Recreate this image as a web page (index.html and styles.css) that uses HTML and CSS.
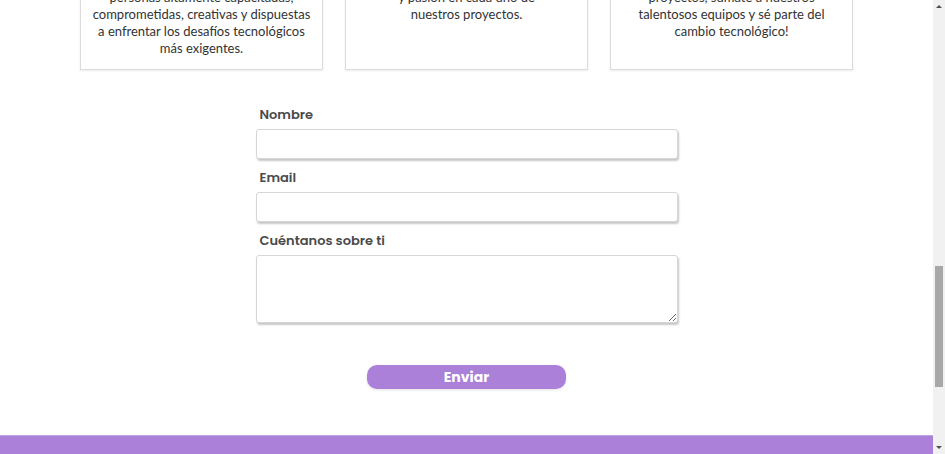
FILE: index.html
```html
<!DOCTYPE html>
<html lang="es">
<head>
<meta charset="utf-8">
<title>Contacto</title>
<link rel="stylesheet" href="styles.css">
</head>
<body>
<div class="page">
  <main class="content">
    <section class="cards">
      <article class="card">
        <p class="card-text">personas altamente capacitadas,<br>comprometidas, creativas y dispuestas<br>a enfrentar los desafíos tecnológicos<br>más exigentes.</p>
      </article>
      <article class="card">
        <p class="card-text">y pasión en cada uno de<br>nuestros proyectos.</p>
      </article>
      <article class="card">
        <p class="card-text">proyectos, súmate a nuestros<br>talentosos equipos y sé parte del<br>cambio tecnológico!</p>
      </article>
    </section>

    <form class="contact">
      <label class="field-label" for="nombre">Nombre</label>
      <input class="field-input" id="nombre" type="text">
      <label class="field-label" for="email">Email</label>
      <input class="field-input" id="email" type="email">
      <label class="field-label" for="about">Cuéntanos sobre ti</label>
      <textarea class="field-area" id="about"></textarea>
      <button class="submit" type="button">Enviar</button>
    </form>

    <footer class="footer"></footer>
  </main>
  <div class="scrollbar">
    <span class="arrow arrow-up"></span>
    <div class="track"><div class="thumb"></div></div>
    <span class="arrow arrow-down"></span>
  </div>
</div>
</body>
</html>
```
FILE: styles.css
```css
* { box-sizing: border-box; }
html, body { margin: 0; padding: 0; height: 100%; overflow: hidden; background: #fff; }
body { font-family: "Lato", "Inter", sans-serif; color: #3a3a3a; }

.page { display: flex; height: 454px; width: 945px; }
.content { flex: 1; display: flex; flex-direction: column; overflow: hidden; }

.cards {
  display: flex;
  justify-content: center;
  gap: 22px;
  margin-top: -23px;
  flex-shrink: 0;
}
.card {
  width: 243px;
  border: 1px solid #dcdcdc;
  box-shadow: 0 1px 2px rgba(0,0,0,0.08);
  padding: 11px 6px 12px;
  text-align: center;
}
.card-text { margin: 0; font-size: 13px; line-height: 17px; color: #333; white-space: nowrap; }

.contact {
  width: 422px;
  margin: 36px auto 0;
  display: flex;
  flex-direction: column;
  flex-shrink: 0;
}
.field-label {
  font-family: "Poppins", "Inter", sans-serif;
  font-weight: 600;
  font-size: 13px;
  line-height: 18px;
  color: #4a4a4a;
  padding-left: 4px;
  margin-bottom: 5px;
}
.field-input, .field-area {
  border: 1px solid #d6d6d6;
  border-radius: 3px;
  box-shadow: 1px 2px 2px rgba(0,0,0,0.22);
  background: #fff;
  font: inherit;
}
.field-input { height: 30px; margin-bottom: 10px; }
.field-area { height: 68px; resize: vertical; }

.submit {
  align-self: center;
  margin-top: 42px;
  width: 199px;
  height: 24px;
  border: none;
  border-radius: 10px;
  background: #aa80d9;
  color: #fff;
  font-family: "Poppins", "Inter", sans-serif;
  font-weight: 700;
  font-size: 14px;
  box-shadow: 0 1px 3px rgba(0,0,0,0.12);
}

.footer {
  margin-top: 46px;
  height: 19px;
  background: #aa80d8;
  border-top: 1px solid #c3a4e4;
  flex-shrink: 0;
}

.scrollbar {
  width: 12px;
  background: #f1f1f1;
  display: flex;
  flex-direction: column;
  align-items: center;
  flex-shrink: 0;
}
.track { flex: 1; width: 100%; padding-top: 253px; display: flex; justify-content: center; }
.thumb { width: 8px; height: 121px; background: #a8a8a8; }
.arrow { width: 0; height: 0; border-left: 3px solid transparent; border-right: 3px solid transparent; margin: 5px 0; }
.arrow-up { border-bottom: 3px solid #505050; }
.arrow-down { border-top: 3px solid #505050; }
```
